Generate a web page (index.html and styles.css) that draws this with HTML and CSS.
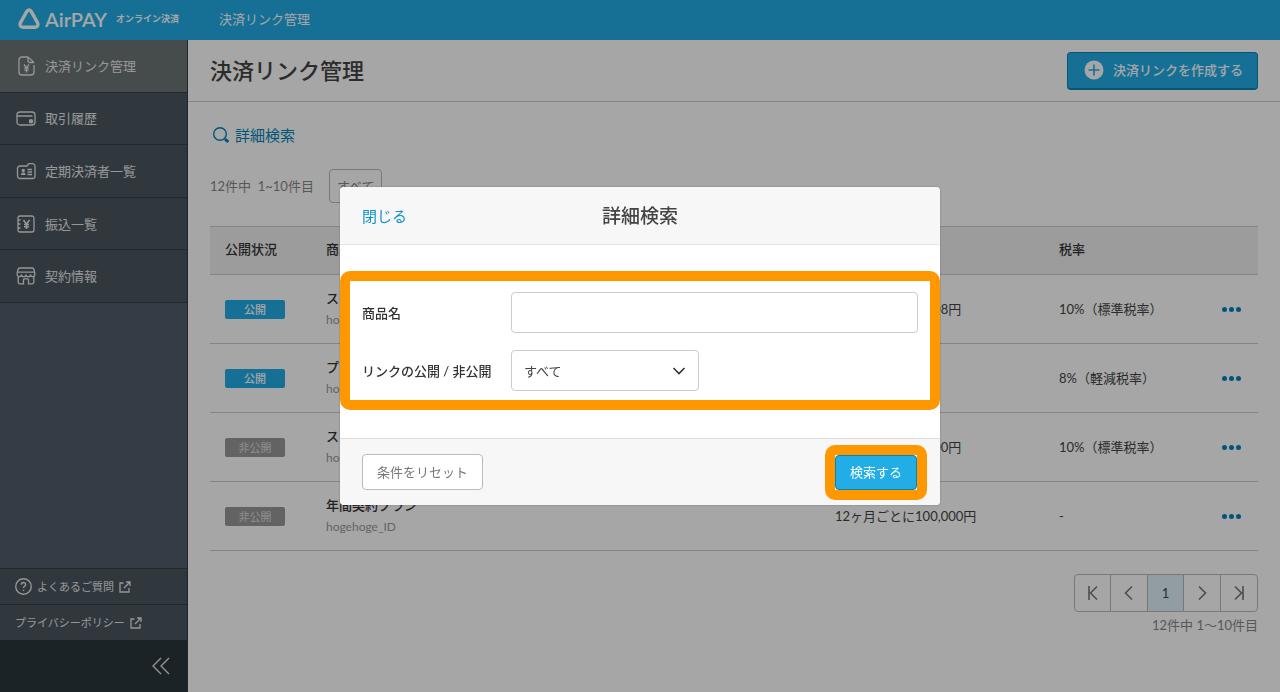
FILE: index.html
```
<!DOCTYPE html>
<html lang="ja">
<head>
  <meta charset="UTF-8">
  <meta name="viewport" content="width=device-width, initial-scale=1.0">
  <title>決済リンク管理 - AirPAY オンライン決済</title>
  <link rel="stylesheet" href="styles.css">
</head>
<body>
  <header class="topbar">
    <a class="logo" href="#">
      <svg width="22" height="22" viewBox="0 0 22 22" fill="none" stroke="currentColor" stroke-width="3.4" stroke-linejoin="round"><path d="M8.800 3.300Q11 .6 13.200 3.300L19.600 14.800Q20.800 19 17 19.200H5Q1.200 19 2.400 14.800Z"/></svg>
      <span class="logo-name">AirPAY</span>
      <span class="logo-sub">オンライン決済</span>
    </a>
    <span class="topbar-title">決済リンク管理</span>
  </header>

  <div class="layout">
    <!-- サイドメニュー -->
    <aside class="sidebar">
      <nav class="menu">
        <a class="menu-item active" href="#">
          <svg class="icon" viewBox="0 0 20 20"><path d="M12 1H6a3 3 0 0 0-3 3v12a3 3 0 0 0 3 3h9a3 3 0 0 0 3-3V9M12 1l6 5.500M12 1v3.500a2 2 0 0 0 2 2h4"/><path d="M8 8.500l2.500 3.500L13 8.500M10.500 12v4.500M8.300 12.200h4.400M8.300 14.200h4.400"/></svg>
          決済リンク管理
        </a>
        <a class="menu-item" href="#">
          <svg class="icon" viewBox="0 0 20 20"><path d="M12.500 17H4a3 3 0 0 1-3-3V7a3 3 0 0 1 3-3h12a3 3 0 0 1 3 3v7a3 3 0 0 1-3 3h-3.500M1.500 8h15"/><circle cx="15" cy="13.300" r="1.600" fill="currentColor"/></svg>
          取引履歴
        </a>
        <a class="menu-item" href="#">
          <svg class="icon" viewBox="0 0 20 20"><path d="M4 5h7l1.800-2.300h3.500A2.500 2.500 0 0 1 19 5.200V15a2.500 2.500 0 0 1-2.500 2.500H4A2.500 2.500 0 0 1 1.500 15V7.500A2.500 2.500 0 0 1 4 5M11.500 8.500H16M11.500 11H16M11.500 13.500H16"/><path d="M5 14c0-2 1-2.600 2.300-2.600s2.300.6 2.300 2.600z" fill="currentColor" stroke="none"/><circle cx="7.300" cy="9.500" r="1.700" fill="currentColor" stroke="none"/></svg>
          定期決済者一覧
        </a>
        <a class="menu-item" href="#">
          <svg class="icon" viewBox="0 0 20 20"><path d="M2 3.500A1.800 1.800 0 0 1 3.800 2h12A2.200 2.200 0 0 1 18 4.200v11.600a2.200 2.200 0 0 1-2.200 2.200h-12A1.800 1.800 0 0 1 2 16.200zM2 6h2.500M2 10h2.500M2 14h2.500"/><path d="M7.500 6l3 4.300L13.500 6M10.500 10.300V15M8 10.500h5M8 12.700h5" stroke-width="1.500"/></svg>
          振込一覧
        </a>
        <a class="menu-item" href="#">
          <svg class="icon" viewBox="0 0 20 20"><path d="M4 2h12a2 2 0 0 1 2 1.500l.8 3.500v1.200a2.200 2.200 0 0 1-4.400.4 2.200 2.200 0 0 1-4.400 0 2.200 2.200 0 0 1-4.400 0 2.200 2.200 0 0 1-4.400-.4V7L2 3.500A2 2 0 0 1 4 2M1.500 6.200h17M2.200 10.800V16a1.800 1.800 0 0 0 1.800 1.800h3.500v-4a1 1 0 0 1 1-1h3a1 1 0 0 1 1 1v4H16a1.800 1.800 0 0 0 1.800-1.800v-5.200"/></svg>
          契約情報
        </a>
      </nav>
      <div class="side-links">
        <a href="#">
          <svg width="17" height="17" viewBox="0 0 16 16"><circle cx="8" cy="8" r="7.300"/><path d="M5.900 6.400C6 3.500 10.200 3.700 10 6.200 9.900 7.500 8 7.600 8 9.500M8 11v1.200"/></svg>
          よくあるご質問
          <svg width="12" height="12" viewBox="0 0 12 12"><path d="M4.500 2H1v9h9V7M5 7l6-6M7 1h4v4"/></svg>
        </a>
        <a href="#">
          プライバシーポリシー
          <svg width="12" height="12" viewBox="0 0 12 12"><path d="M4.500 2H1v9h9V7M5 7l6-6M7 1h4v4"/></svg>
        </a>
      </div>
      <button class="collapse" type="button" aria-label="メニューを閉じる">
        <svg width="18" height="18" viewBox="0 0 18 18"><path d="M9 1L1 9l8 8M17 1L9 9l8 8"/></svg>
      </button>
    </aside>

    <main class="main">
      <div class="page-head">
        <h1>決済リンク管理</h1>
        <button class="create" type="button">
          <svg width="20" height="20" viewBox="0 0 20 20"><circle cx="10" cy="10" r="9.500" fill="#fff"/><path d="M10 4.500v11M4.500 10h11" stroke="#22ade6" stroke-width="1.600"/></svg>
          決済リンクを作成する
        </button>
      </div>

      <div class="content">
        <a class="search-link" href="#">
          <svg width="18" height="18" viewBox="0 0 18 18" fill="none" stroke="currentColor"><circle cx="8" cy="8" r="6.300" stroke-width="1.400"/><path d="M12.500 12.500l1.500 1.500" stroke-width="1.400"/><path d="M13.300 13.300l3 2.700" stroke-width="3"/></svg>
          詳細検索
        </a>

        <div class="filter">
          <span>12件中&nbsp; 1~10件目</span>
          <button type="button">すべて</button>
        </div>

        <table class="links">
          <thead>
            <tr>
              <th class="col-status">公開状況</th>
              <th>商品名</th>
              <th class="col-price">料金</th>
              <th class="col-tax">税率</th>
              <th class="col-more"></th>
            </tr>
          </thead>
          <tbody>
            <tr>
              <td><span class="badge open">公開</span></td>
              <td><strong>スタンダードプラン</strong><small>hogehoge_ID</small></td>
              <td>1ヶ月ごとに10,008円</td>
              <td>10%（標準税率）</td>
              <td><button class="more" type="button" aria-label="操作"><i></i><i></i><i></i></button></td>
            </tr>
            <tr>
              <td><span class="badge open">公開</span></td>
              <td><strong>プレミアムセット</strong><small>hogehoge_ID</small></td>
              <td>5,000円</td>
              <td>8%（軽減税率）</td>
              <td><button class="more" type="button" aria-label="操作"><i></i><i></i><i></i></button></td>
            </tr>
            <tr>
              <td><span class="badge">非公開</span></td>
              <td><strong>スタートプラン</strong><small>hogehoge_ID</small></td>
              <td>1ヶ月ごとに10,000円</td>
              <td>10%（標準税率）</td>
              <td><button class="more" type="button" aria-label="操作"><i></i><i></i><i></i></button></td>
            </tr>
            <tr>
              <td><span class="badge">非公開</span></td>
              <td><strong>年間契約プラン</strong><small>hogehoge_ID</small></td>
              <td>12ヶ月ごとに100,000円</td>
              <td>-</td>
              <td><button class="more" type="button" aria-label="操作"><i></i><i></i><i></i></button></td>
            </tr>
          </tbody>
        </table>

        <div class="paging">
          <div class="pager">
            <button type="button" aria-label="最初"><svg width="16" height="16" viewBox="0 0 16 16"><path d="M4 1v14M12 1.500L5.500 8l6.500 6.500"/></svg></button>
            <button type="button" aria-label="前へ"><svg width="16" height="16" viewBox="0 0 16 16"><path d="M11 1.500L4.500 8l6.500 6.500"/></svg></button>
            <button type="button" class="current">1</button>
            <button type="button" aria-label="次へ"><svg width="16" height="16" viewBox="0 0 16 16"><path d="M5 1.500L11.500 8 5 14.500"/></svg></button>
            <button type="button" aria-label="最後"><svg width="16" height="16" viewBox="0 0 16 16"><path d="M12 1v14M4 1.500L10.500 8 4 14.500"/></svg></button>
          </div>
          <span>12件中 1〜10件目</span>
        </div>
      </div>
    </main>
  </div>

  <!-- 詳細検索モーダル -->
  <div class="overlay">
    <form class="modal" role="dialog" aria-labelledby="modalTitle">
      <div class="modal-head">
        <button class="close" type="button">閉じる</button>
        <h2 id="modalTitle">詳細検索</h2>
      </div>
      <div class="modal-body">
        <div class="mark fields">
          <label for="itemName">商品名</label>
          <input id="itemName" type="text">
          <label for="linkStatus">リンクの公開 / 非公開</label>
          <div class="select">
            <select id="linkStatus">
              <option>すべて</option>
              <option>公開</option>
              <option>非公開</option>
            </select>
            <svg width="14" height="14" viewBox="0 0 14 14"><path d="M1.500 4L7 9.500 12.500 4"/></svg>
          </div>
        </div>
      </div>
      <div class="modal-foot">
        <button class="reset" type="reset">条件をリセット</button>
        <div class="mark"><button class="submit" type="button">検索する</button></div>
      </div>
    </form>
  </div>
</body>
</html>
```
FILE: styles.css
```
* { box-sizing: border-box; }
body { margin: 0; min-height: 100vh; display: flex; flex-direction: column; font-family: Lato, "Noto Sans CJK JP", sans-serif; font-size: 13px; line-height: 20px; color: #444; background: #fff; }
a { color: inherit; text-decoration: none; }
button, input, select { font: inherit; color: inherit; margin: 0; padding: 0; }
button { border: 0; background: none; cursor: pointer; }
h1, h2 { margin: 0; font-weight: 500; }
svg { flex: none; }

.topbar { height: 40px; padding-bottom: 2px; display: flex; align-items: center; background: #22ade6; color: #fff; }
.logo { width: 188px; padding-left: 18px; display: flex; align-items: center; gap: 5px; }
.logo-name { font-size: 20px; font-weight: 600; }
.logo-sub { margin-left: 4px; font-size: 9px; font-weight: 600; white-space: nowrap; }
.topbar-title { padding-left: 31px; }

.layout { flex: 1; display: flex; }
.sidebar { width: 188px; flex: none; display: flex; flex-direction: column; background: #505e6a; color: #e6e8ea; border-right: 1px solid #303a42; }
.sidebar svg { fill: none; stroke: currentColor; stroke-width: 1.3; }
.menu { height: 263px; display: grid; grid-template-rows: repeat(5, 1fr); }
.menu-item { padding-left: 16px; display: flex; align-items: center; gap: 9px; background: #4a565f; border-bottom: 1px solid #353f46; }
.menu-item.active { background: #6c7376; }
.icon { width: 20px; height: 20px; }
.side-links { margin-top: auto; font-size: 11px; }
.side-links a { height: 36px; padding-left: 15px; display: flex; align-items: center; gap: 5px; background: #4a565f; border-top: 1px solid #353f46; }
.collapse { height: 52px; padding-right: 17px; display: flex; align-items: center; justify-content: flex-end; background: #2b373c; }

.main { flex: 1; min-width: 0; }
.page-head { height: 62px; padding: 0 22px; display: flex; align-items: center; justify-content: space-between; border-bottom: 1px solid #ccc; }
h1 { font-size: 22px; line-height: 32px; }
.create { height: 38px; padding: 0 14px 0 16px; display: flex; align-items: center; gap: 9px; border: 1px solid #0a83b5; border-bottom-width: 2px; border-radius: 4px; background: #22ade6; color: #fff; font-weight: 500; }
.content { padding: 21px 22px 0; }
.search-link { display: flex; align-items: center; gap: 5px; padding-left: 2px; font-size: 15px; line-height: 24px; color: #0084bb; }
.filter { margin: 22px 0 23px; display: flex; align-items: center; gap: 15px; color: #888; }
.filter button { height: 34px; padding: 0 7px; border: 1px solid #bbb; border-radius: 4px; }

.links { width: 100%; table-layout: fixed; border-collapse: collapse; text-align: left; }
.links th { height: 48px; padding: 0 0 3px 15px; font-weight: 500; background: #f0f0f0; border-top: 1px solid #ccc; border-bottom: 1px solid #ccc; color: #333; }
.links td { height: 69px; padding: 0 0 0 15px; border-bottom: 1px solid #ccc; }
.col-status { width: 101px; }
.col-price { width: 224px; }
.col-tax { width: 146px; }
.col-more { width: 68px; }
.links strong { display: block; font-weight: 500; color: #333; }
.links small { display: block; margin-top: 2px; font-size: 12px; color: #999; }
.badge { display: block; width: 60px; border-radius: 2px; background: #999; color: #ddd; font-size: 11px; line-height: 19px; text-align: center; }
.badge.open { background: #22ade6; color: #fff; font-weight: 500; }
.more { display: flex; gap: 2px; margin: 0 17px 0 auto; }
.more i { width: 5px; height: 5px; border-radius: 50%; background: #0084bb; }

.paging { margin-top: 23px; display: flex; flex-direction: column; align-items: flex-end; gap: 3px; color: #888; }
.pager { width: 184px; display: grid; grid-template-columns: repeat(5, 1fr); border: 1px solid #bbb; border-radius: 4px; overflow: hidden; }
.pager button { height: 36px; display: flex; align-items: center; justify-content: center; border-right: 1px solid #bbb; color: #444; }
.pager button:last-child { border-right: 0; }
.pager svg { fill: none; stroke: #777; stroke-width: 1.6; }
.pager .current { background: #dff1fb; }

.overlay { position: fixed; inset: 0; display: flex; align-items: center; justify-content: center; background: rgba(0,0,0,0.35); }
.modal { width: 600px; max-width: 100%; border-radius: 4px; background: #fff; box-shadow: 0 0 2px rgba(0,0,0,0.3); overflow: hidden; }
.modal-head { height: 58px; padding: 0 22px; display: grid; grid-template-columns: 1fr auto 1fr; align-items: center; background: #f7f7f7; border-bottom: 1px solid #e6e6e6; }
h2 { font-size: 19px; line-height: 28px; }
.close { justify-self: start; font-size: 15px; color: #0d92ca; }
.modal-body { padding: 26px 0 28px; }
/* オレンジの強調枠 */
.mark { border: 10px solid #ff9800; border-radius: 10px; }
.fields { padding: 11px 12px 9px; display: grid; grid-template-columns: 149px 1fr; row-gap: 17px; align-items: center; }
.fields label { font-weight: 500; color: #333; }
.fields input, .fields select { width: 100%; height: 41px; padding: 0 12px; border: 1px solid #ccc; border-radius: 4px; background: #fff; }
.select { width: 188px; display: grid; align-items: center; }
.select select, .select svg { grid-area: 1 / 1; }
.select select { appearance: none; }
.select svg { justify-self: end; margin-right: 13px; fill: none; stroke: #333; stroke-width: 1.6; pointer-events: none; }
.modal-foot { height: 67px; padding: 0 13px 0 22px; display: flex; align-items: center; justify-content: space-between; background: #f7f7f7; border-top: 1px solid #ddd; }
.reset { height: 36px; padding: 0 14px; border: 1px solid #bbb; border-radius: 4px; background: #fff; color: #777; }
.submit { display: block; width: 82px; height: 35px; border: 1px solid #0a83b5; border-radius: 4px; background: #22ade6; color: #fff; }
```
